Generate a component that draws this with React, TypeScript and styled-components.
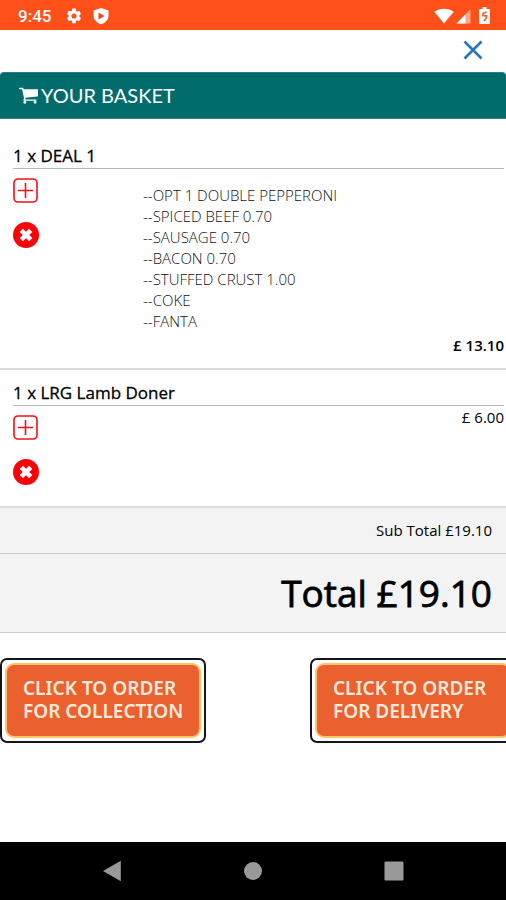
import React from "react";
import styled, { createGlobalStyle } from "styled-components";

const GlobalStyle = createGlobalStyle`
  *, *::before, *::after { box-sizing: border-box; }
  body { margin: 0; background: #fff; color: #000; font-family: "Open Sans", "Noto Sans", sans-serif; }
  button { font: inherit; color: inherit; cursor: pointer; }
  h1, h2, p, ul { margin: 0; padding: 0; font-weight: 400; }
  svg { display: block; flex: none; }
`;

const Screen = styled.div`
  display: flex;
  flex-direction: column;
  min-height: 100vh;
  overflow-x: hidden;
`;

const StatusBar = styled.header`
  display: flex;
  align-items: center;
  height: 30px;
  padding: 1px 16px 0 18px;
  background: #ff5019;
  color: #fff;
`;

const Clock = styled.span`
  margin-right: 14px;
  font: 500 17px/20px Roboto, sans-serif;
`;

const StatusIcons = styled.div<{ $gap: number; $end?: boolean }>`
  display: flex;
  align-items: center;
  gap: ${(p) => p.$gap}px;
  margin-left: ${(p) => (p.$end ? "auto" : "0")};
`;

const CloseRow = styled.div`
  display: flex;
  justify-content: flex-end;
  height: 42px;
  padding: 8px 21px 0 0;
`;

const IconButton = styled.button`
  display: flex;
  align-items: center;
  justify-content: center;
  padding: 0;
  border: 0;
  background: none;
`;

const CloseButton = styled(IconButton)`
  width: 24px;
  height: 24px;
`;

const BasketHeader = styled.div`
  display: flex;
  align-items: center;
  gap: 3px;
  height: 47px;
  padding: 0 19px 2px;
  border: 1px solid #2f7f80;
  border-width: 1px 0;
  border-radius: 4px 4px 0 0;
  background: #026c6c;
  color: #fff;
`;

const BasketTitle = styled.h1`
  font: 400 20px/24px Lato, sans-serif;
`;

const ItemList = styled.div`
  padding-top: 14px;
`;

const Item = styled.section`
  padding: 11px 2px 12px 13px;
  border-bottom: 2px solid #dcdcdc;
`;

const ItemTitle = styled.h2`
  border-bottom: 1px solid #b8b8b8;
  font-size: 17px;
  line-height: 24px;
  -webkit-text-stroke: 0.3px #000;
`;

const ItemBody = styled.div`
  display: grid;
  grid-template-columns: 130px 1fr;
`;

const ItemActions = styled.div`
  display: flex;
  flex-direction: column;
  align-items: flex-start;
  gap: 18px;
  padding: 9px 0;
`;

const ItemDetails = styled.div`
  display: flex;
  flex-direction: column;
`;

const Options = styled.ul`
  padding: 16px 0 2px;
  list-style: none;
  color: #111;
  font-size: 15px;
  font-weight: 300;
  line-height: 21px;
`;

const Price = styled.p<{ $strong?: boolean }>`
  align-self: flex-end;
  font-size: 15px;
  font-weight: ${(p) => (p.$strong ? 600 : 500)};
  line-height: 22px;
`;

const SummaryRow = styled.div<{ $large?: boolean }>`
  display: flex;
  justify-content: flex-end;
  padding: ${(p) => (p.$large ? "14px" : "11px")} 14px;
  border-bottom: 1px solid #ccc;
  background: #f3f3f3;
  font-size: ${(p) => (p.$large ? 37 : 15)}px;
  font-weight: 500;
  line-height: ${(p) => (p.$large ? 50 : 23)}px;
  -webkit-text-stroke: ${(p) => (p.$large ? "0.8px #000" : "0")};
`;

const Orders = styled.div`
  display: flex;
  justify-content: space-between;
  margin: 25px -10px 40px 0;
`;

const OrderButton = styled.button`
  flex: none;
  width: 206px;
  padding: 3px;
  border: 2px solid #15151c;
  border-radius: 7px;
  background: #fff;
`;

const OrderLabel = styled.span`
  display: block;
  padding: 12px 16px 13px;
  border: 2px solid #ffc36c;
  border-radius: 9px;
  background: #eb602f;
  color: #ffeadc;
  font: 600 19px/23px "Noto Sans", sans-serif;
  text-align: left;
  white-space: nowrap;
`;

const NavBar = styled.nav`
  display: grid;
  grid-template-columns: repeat(3, 1fr);
  justify-items: center;
  align-items: center;
  height: 58px;
  margin-top: auto;
  padding: 0 42px;
  background: #000;
`;

const GearIcon = () => (
  <svg width="18" height="18" viewBox="0 0 24 24" fill="#fff" aria-hidden="true">
    <path d="M19.14 12.94c.04-.3.06-.61.06-.94s-.02-.64-.07-.94l2.03-1.58a.49.49 0 0 0 .12-.61l-1.92-3.32a.49.49 0 0 0-.59-.22l-2.39.96a7 7 0 0 0-1.62-.94l-.36-2.54A.48.48 0 0 0 13.92 2h-3.84a.48.48 0 0 0-.47.41l-.36 2.54c-.59.24-1.13.57-1.62.94l-2.39-.96a.48.48 0 0 0-.59.22L2.74 8.87a.48.48 0 0 0 .12.61l2.03 1.58c-.05.3-.09.63-.09.94s.02.64.07.94l-2.03 1.58a.49.49 0 0 0-.12.61l1.92 3.32c.12.22.37.29.59.22l2.39-.96c.5.38 1.03.7 1.62.94l.36 2.54c.05.24.24.41.48.41h3.84c.24 0 .44-.17.47-.41l.36-2.54a7 7 0 0 0 1.62-.94l2.39.96c.22.08.47 0 .59-.22l1.92-3.32a.48.48 0 0 0-.12-.61zM12 15.400a3.400 3.400 0 1 1 0-6.800 3.400 3.400 0 0 1 0 6.800z" />
  </svg>
);

const ShieldIcon = () => (
  <svg width="16" height="18" viewBox="0 0 16 18" aria-hidden="true">
    <path fill="#fff" d="M8 1l7.500 2.500v5C15.500 12.800 12.300 16 8 17.300 3.700 16 .5 12.800.5 8.500v-5z" />
    <path fill="#f04422" d="M5.500 5.500v7L11.500 9z" />
  </svg>
);

const WifiIcon = () => (
  <svg width="20" height="16" viewBox="0 0 20 16" aria-hidden="true">
    <path fill="#fff" d="M.3 3.800C5.500-.2 14.500-.2 19.700 3.800L10 15.500z" />
  </svg>
);

const SignalIcon = () => (
  <svg width="15" height="16" viewBox="0 0 15 16" aria-hidden="true">
    <path fill="#ffa58b" d="M14.500 1v14.500H.5z" />
    <path fill="#fff" d="M9.500 6.200v9.300H.5z" />
  </svg>
);

const BatteryIcon = () => (
  <svg width="11" height="17" viewBox="0 0 11 17" aria-hidden="true">
    <path fill="#fff" d="M3.500 0h4v2H10q1 0 1 1v13q0 1-1 1H1q-1 0-1-1V3q0-1 1-1h2.500z" />
    <path fill="none" stroke="#ff5019" strokeWidth="1.500" d="M7.500 4.800L4 6.500v2.300h3.300v2.400L4.800 14" />
  </svg>
);

const CloseIcon = () => (
  <svg width="20" height="20" viewBox="0 0 20 20" aria-hidden="true">
    <path d="M1.500 1.500l17 17M18.500 1.500l-17 17" stroke="#2477bd" strokeWidth="2.600" />
  </svg>
);

const CartIcon = () => (
  <svg width="19" height="18" viewBox="0 0 1664 1536" fill="#fff" aria-hidden="true">
    <path d="M640 1408q0 52-38 90t-90 38-90-38-38-90 38-90 90-38 90 38 38 90zm896 0q0 52-38 90t-90 38-90-38-38-90 38-90 90-38 90 38 38 90zm128-1088v512q0 24-16.500 42.500T1607 896L563 1018q13 60 13 70 0 16-24 64h920q26 0 45 19t19 45-19 45-45 19H448q-26 0-45-19t-19-45q0-11 8-31.500t16-36 21.500-40T445 1079L268 256H64q-26 0-45-19T0 192t19-45 45-19h256q16 0 28.500 6.500T368 150t13 24.500 8 26 5.500 29.500 4.500 26h1201q26 0 45 19t19 45z" />
  </svg>
);

const AddIcon = () => (
  <svg width="25" height="26" viewBox="0 0 25 26" fill="none" stroke="#f01018" aria-hidden="true">
    <rect x="1" y="1" width="23" height="23" rx="4" strokeWidth="1.600" />
    <path d="M12.500 5v15M5 12.500h15" strokeWidth="1.600" />
  </svg>
);

const RemoveIcon = () => (
  <svg width="26" height="26" viewBox="0 0 26 26" aria-hidden="true">
    <circle cx="13" cy="13" r="13" fill="#fa0408" />
    <path d="M8.300 8.300l9.400 9.400M17.700 8.300l-9.400 9.400" stroke="#fff" strokeWidth="4.600" />
  </svg>
);

const BackIcon = () => (
  <svg width="20" height="22" viewBox="0 0 20 22" aria-hidden="true">
    <path fill="#999" d="M1 11L18.800 .8v20.400z" />
  </svg>
);

const HomeIcon = () => (
  <svg width="20" height="20" viewBox="0 0 20 20" aria-hidden="true">
    <circle cx="10" cy="10" r="9" fill="#999" />
  </svg>
);

const RecentIcon = () => (
  <svg width="20" height="20" viewBox="0 0 20 20" aria-hidden="true">
    <rect x="0.500" y="0.500" width="19" height="19" rx="1" fill="#999" />
  </svg>
);

type BasketItem = { title: string; price: string; options: string[] };

const items: BasketItem[] = [
  {
    title: "1 x DEAL 1",
    price: "£ 13.10",
    options: [
      "--OPT 1 DOUBLE PEPPERONI",
      "--SPICED BEEF 0.70",
      "--SAUSAGE 0.70",
      "--BACON 0.70",
      "--STUFFED CRUST 1.00",
      "--COKE",
      "--FANTA",
    ],
  },
  { title: "1 x LRG Lamb Doner", price: "£ 6.00", options: [] },
];

const BasketRow = ({ item }: { item: BasketItem }) => (
  <Item>
    <ItemTitle>{item.title}</ItemTitle>
    <ItemBody>
      <ItemActions>
        <IconButton type="button" aria-label={`Add another ${item.title}`}>
          <AddIcon />
        </IconButton>
        <IconButton type="button" aria-label={`Remove ${item.title}`}>
          <RemoveIcon />
        </IconButton>
      </ItemActions>
      <ItemDetails>
        {item.options.length > 0 && (
          <Options>
            {item.options.map((option) => (
              <li key={option}>{option}</li>
            ))}
          </Options>
        )}
        <Price $strong={item.options.length > 0}>{item.price}</Price>
      </ItemDetails>
    </ItemBody>
  </Item>
);

export default function App() {
  return (
    <Screen>
      <GlobalStyle />
      <StatusBar>
        <Clock>9:45</Clock>
        <StatusIcons $gap={10}>
          <GearIcon />
          <ShieldIcon />
        </StatusIcons>
        <StatusIcons $gap={8} $end>
          <StatusIcons $gap={2}>
            <WifiIcon />
            <SignalIcon />
          </StatusIcons>
          <BatteryIcon />
        </StatusIcons>
      </StatusBar>
      <main>
        <CloseRow>
          <CloseButton type="button" aria-label="Close basket">
            <CloseIcon />
          </CloseButton>
        </CloseRow>
        <BasketHeader>
          <CartIcon />
          <BasketTitle>YOUR BASKET</BasketTitle>
        </BasketHeader>
        <ItemList>
          {items.map((item) => (
            <BasketRow key={item.title} item={item} />
          ))}
        </ItemList>
        <SummaryRow>Sub Total £19.10</SummaryRow>
        <SummaryRow $large>Total £19.10</SummaryRow>
        <Orders>
          <OrderButton type="button">
            <OrderLabel>
              CLICK TO ORDER
              <br />
              FOR COLLECTION
            </OrderLabel>
          </OrderButton>
          <OrderButton type="button">
            <OrderLabel>
              CLICK TO ORDER
              <br />
              FOR DELIVERY
            </OrderLabel>
          </OrderButton>
        </Orders>
      </main>
      <NavBar>
        <IconButton type="button" aria-label="Back">
          <BackIcon />
        </IconButton>
        <IconButton type="button" aria-label="Home">
          <HomeIcon />
        </IconButton>
        <IconButton type="button" aria-label="Recent apps">
          <RecentIcon />
        </IconButton>
      </NavBar>
    </Screen>
  );
}
